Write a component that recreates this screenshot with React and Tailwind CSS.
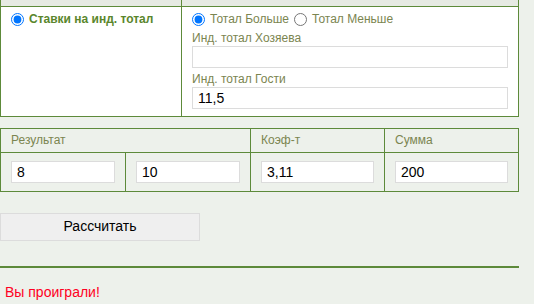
export default function App() {
  const font = { fontFamily: '"Liberation Sans", Tahoma, Arial, sans-serif' };
  const box =
    "block h-[22px] w-full border border-[#dcdcdc] bg-white px-[5px] text-[14px] leading-[20px] text-black outline-none";
  return (
    <div className="min-h-[304px] bg-[#edf1eb] text-[12px] leading-[15px]" style={font}>
      <div className="w-[519px]">
        <table className="w-full table-fixed border-collapse">
          <colgroup>
            <col className="w-[181px]" />
            <col />
          </colgroup>
          <tbody>
            <tr className="h-[6px] bg-[#e6eae3]">
              <td className="border border-t-0 border-[#5d8a3a] p-0"></td>
              <td className="border border-t-0 border-[#5d8a3a] p-0"></td>
            </tr>
            <tr className="bg-white align-top">
              <td className="border border-[#5d8a3a] px-[10px] pt-[6px]">
                <label className="flex h-[14px] items-center gap-[5px] font-bold text-[#5a862c]">
                  <input type="radio" name="mode" defaultChecked className="m-0 h-[13px] w-[13px]" />
                  Ставки на инд. тотал
                </label>
              </td>
              <td className="border border-[#5d8a3a] px-[10px] pt-[6px] pb-[7px] text-[#7b8550]">
                <div className="flex h-[14px] items-center">
                  <input type="radio" name="t" defaultChecked className="m-0 mr-[5px] h-[13px] w-[13px]" />
                  <span>Тотал Больше</span>
                  <input type="radio" name="t" className="m-0 mx-[5px] h-[13px] w-[13px]" />
                  <span>Тотал Меньше</span>
                </div>
                <div className="mt-[4px]">Инд. тотал Хозяева</div>
                <input className={box} />
                <div className="mt-[4px]">Инд. тотал Гости</div>
                <input defaultValue="11,5" className={box} />
              </td>
            </tr>
          </tbody>
        </table>

        <table className="mt-[11px] w-full table-fixed border-collapse text-[#7b8550]">
          <colgroup>
            <col className="w-[125px]" />
            <col className="w-[125px]" />
            <col className="w-[134px]" />
            <col />
          </colgroup>
          <tbody>
            <tr className="h-[24px]">
              <td colSpan={2} className="border border-[#5d8a3a] px-[10px]">Результат</td>
              <td className="border border-[#5d8a3a] px-[10px]">Коэф-т</td>
              <td className="border border-[#5d8a3a] px-[10px]">Сумма</td>
            </tr>
            <tr>
              {["8", "10", "3,11", "200"].map((v, i) => (
                <td key={i} className="border border-[#5d8a3a] px-[10px] py-[8px]">
                  <input defaultValue={v} className={box} />
                </td>
              ))}
            </tr>
          </tbody>
        </table>

        <button className="mt-[21px] block h-[28px] w-[200px] border border-[#dcdcdc] bg-[#efefef] text-[14px] text-black">
          Рассчитать
        </button>

        <div className="mt-[25px] h-[2px] bg-[#5d8a3a]"></div>
        <p className="mt-[16px] pl-[5px] text-[14px] leading-[17px] text-[#ff0022]">Вы проиграли!</p>
      </div>
    </div>
  );
}
